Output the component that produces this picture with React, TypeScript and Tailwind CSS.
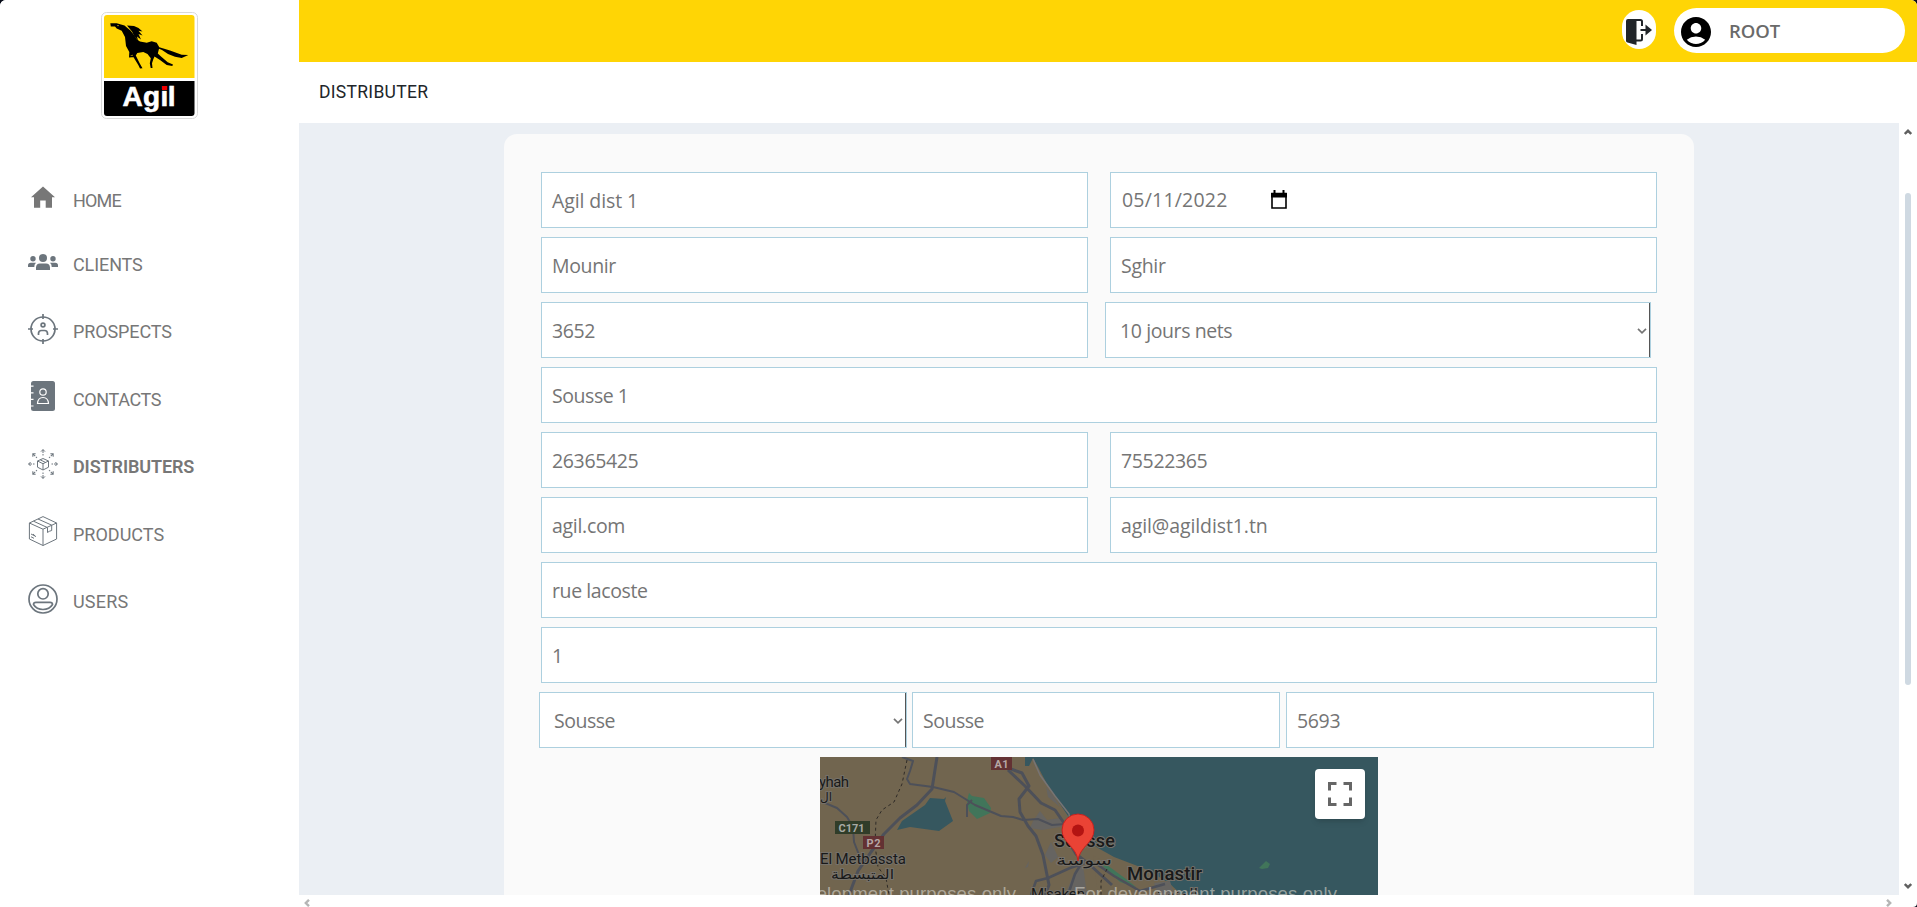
import React from "react";
import { MdAccountCircle } from "react-icons/md";

const stroke = { fill: "none", stroke: "currentColor" } as const;

function Logo() {
  return (
    <svg width="97" height="107" viewBox="0 0 97 107">
      <rect x="0.5" y="0.5" width="96" height="106" rx="5" fill="#fff" stroke="#d9d9d9" />
      <path d="M3 66V6a3 3 0 0 1 3-3H90.500a3 3 0 0 1 3 3V66Z" fill="#ffd505" />
      <path d="M3 69H93.500V101a3 3 0 0 1-3 3H6a3 3 0 0 1-3-3Z" fill="#000" />
      <path
        fill="#000"
        d="M9.300 11.300 15.700 11.300 20 12.500 23.500 13.500 27 16.500 29.700 18.700 33 23 36 27.500 39 29.500 45.700 30.700 50.700 29.300 55.700 30.700 58.300 35.300 69 38.500 80.700 42.700 87.300 43 80.700 46 74 44.800 67 42 61 38 58 36.700 56.800 41.500 60 44.500 66.700 50.200 72 52.500 71.300 54 65.700 53 59 48 53.500 44.500 52.300 47.300 51 51.300 51.500 56 49.700 56 48.800 51.300 49.800 46.300 46.500 42 42.300 40 36.300 41 34.800 43.500 38.500 51 41.500 56.300 39 56.500 37.300 53 33 46 31.500 42.800 29 43.500 34.500 43.800 34 45 28 45.500 28.300 40 25 34 24 25 20.700 18.700 15.700 16.500 14 14.500 9.800 14.500Z"
      />
      <path
        fill="#000"
        d="M26 13.500 33 14 37.500 16 41.500 19.500 37.500 18.700 41.500 23.500 37.500 22 40 27.500 36 24.500 37 28.500 33.500 24.500 31 19.500Z"
      />
      <circle cx="17" cy="13.600" r="0.700" fill="#ffd505" />
      <text x="21.5 42 59.5 66.800" y="94" fontFamily="Liberation Sans, sans-serif" fontWeight="700" fontSize="28" fill="#fff" stroke="#fff" strokeWidth="0.600">
        Agil
      </text>
      <rect x="60.500" y="72.500" width="6.300" height="6" fill="#000" />
      <rect x="61" y="74" width="5.200" height="4" fill="#f00000" />
    </svg>
  );
}

const HomeIcon = () => (
  <svg width="30" height="30" viewBox="0 0 30 30" fill="#777">
    <path d="M15 3.500 3 14.300h3V24.800h6.200v-7.300h5.500v7.300H24V14.300h3Z" />
  </svg>
);

const ClientsIcon = () => (
  <svg width="30" height="30" viewBox="0 0 30 30" fill="currentColor">
    <circle cx="15" cy="11" r="4" />
    <circle cx="5" cy="11.700" r="2.700" />
    <circle cx="25" cy="11.700" r="2.700" />
    <path d="M8 23v-2.500a4.200 4.200 0 0 1 4-4h6a4.200 4.200 0 0 1 4 4V23ZM0 20v-1.500A2.800 2.800 0 0 1 2.800 15.700H8A5 5 0 0 0 6.300 20ZM30 20v-1.500a2.800 2.800 0 0 0-2.800-2.800H22A5 5 0 0 1 23.700 20Z" />
  </svg>
);

const ProspectsIcon = () => (
  <svg width="30" height="30" viewBox="0 0 30 30" {...stroke} strokeWidth="1.700">
    <circle cx="15" cy="15" r="12" />
    <path d="M15 0v5M15 25v5M0 15h5M25 15h5" />
    <circle cx="15" cy="11" r="1.900" />
    <path d="M10.500 21v-1.500a3 3 0 0 1 3-3h3a3 3 0 0 1 3 3V21" />
  </svg>
);

const ContactsIcon = () => (
  <svg width="30" height="30" viewBox="0 0 30 30">
    <rect x="3" y="0" width="24" height="30" rx="2.500" fill="currentColor" />
    <g fill="none" stroke="#fff" strokeWidth="1.200">
      <path d="M3 5.200h2.500M3 11.800h2.500M3 18.400h2.500M3 25h2.500" />
      <circle cx="15" cy="11" r="3.200" />
      <path d="M9.500 22.500c.3-4 2.400-6 5.500-6s5.200 2 5.500 6Z" />
    </g>
  </svg>
);

const DistributersIcon = () => (
  <svg width="30" height="30" viewBox="0 0 30 30" {...stroke} strokeWidth="1">
    <path d="M15 9.500 20.500 12v6.200L15 21l-5.500-2.800V12ZM9.500 12l5.500 2.700 5.500-2.700M15 14.700V21M12.200 10.800l5.500 2.700" />
    {[0, 45, 90, 135, 180, 225, 270, 315].map((angle) => (
      <g key={angle} transform={`rotate(${angle} 15 15)`}>
        <path d="M15 .6V4M15 5v1.500M13 2.600l2-2 2 2" />
      </g>
    ))}
  </svg>
);

const ProductsIcon = () => (
  <svg width="30" height="30" viewBox="0 0 30 30" {...stroke} strokeWidth="1">
    <path d="M15 .6 28.600 7v16L15 29.500 1.400 23V7ZM1.400 7 15 13.200 28.600 7M15 13.200V29.500M5.500 5.200 19.300 11.500M10 3 23.800 9.200M19.500 11.500v5l1.800-1.200 2.400-.8V9.200M3 18l4 2M3 20.800l3 1.500M5 18l3 2.800" />
  </svg>
);

const UsersIcon = () => (
  <svg width="30" height="30" viewBox="0 0 30 30" {...stroke} strokeWidth="1.700">
    <circle cx="15" cy="15" r="14" />
    <circle cx="15" cy="9.800" r="5.200" />
    <path d="M5.500 20.500c0-1.500 1-2.200 2.500-2.200h14c1.500 0 2.500.7 2.500 2.200-1.800 3-5 5-9.500 5s-7.700-2-9.500-5Z" />
  </svg>
);

const navItems = [
  { label: "HOME", Icon: HomeIcon, row: "h-16", text: "pt-[6px] tracking-[-0.8px]" },
  { label: "CLIENTS", Icon: ClientsIcon, row: "h-[67px]", text: "pt-[6px] tracking-[-0.1px]" },
  { label: "PROSPECTS", Icon: ProspectsIcon, row: "h-[67px]", text: "pt-[6px] tracking-[-0.1px]" },
  { label: "CONTACTS", Icon: ContactsIcon, row: "h-[68px]", text: "pt-[7px] tracking-[-0.4px]" },
  { label: "DISTRIBUTERS", Icon: DistributersIcon, row: "h-[67px]", text: "pt-[6px] font-semibold tracking-[-0.1px]" },
  { label: "PRODUCTS", Icon: ProductsIcon, row: "h-[68px]", text: "pt-[7px]" },
  { label: "USERS", Icon: UsersIcon, row: "h-[67px]", text: "pt-[6px] tracking-[0.2px]" },
];

function Sidebar() {
  return (
    <aside className="flex w-[299px] shrink-0 flex-col bg-white">
      <div className="pt-3 pl-[101px]">
        <Logo />
      </div>
      <nav className="flex flex-col pt-[64px] pl-7 text-[#6c757d]">
        {navItems.map(({ label, Icon, row, text }) => (
          <a key={label} className={`flex items-start ${row}`}>
            <Icon />
            <span className={`ml-[15px] font-[Roboto,sans-serif] text-[18px] leading-6 text-[#777] ${text}`}>{label}</span>
          </a>
        ))}
      </nav>
    </aside>
  );
}

function Chevron({ className = "" }: { className?: string }) {
  return (
    <svg className={className} width="10" height="6" viewBox="0 0 10 6" fill="none" stroke="currentColor">
      <path d="M1 .8 5 4.800 9 .8" strokeWidth="1.700" />
    </svg>
  );
}

function ScrollArrow({ className = "" }: { className?: string }) {
  return (
    <svg className={className} width="8" height="6" viewBox="0 0 8 6" fill="none" stroke="currentColor">
      <path d="M.8 1 4 4.200 7.200 1" strokeWidth="2.400" />
    </svg>
  );
}

function Header() {
  return (
    <header className="flex h-[62px] shrink-0 items-start justify-end bg-[#ffd505] pr-3">
      <button className="mt-[10px] mr-[18px] flex h-[39px] w-[34px] items-center justify-center rounded-[17px] bg-white pt-1">
        <svg width="26" height="26" viewBox="0 0 26 26" fill="#212529">
          <path d="M0 2a2 2 0 0 1 2-2h8.500v26L1.500 23.500A2 2 0 0 1 0 21.500Z" />
          <path d="M10 1h4.500A1.500 1.500 0 0 1 16 2.500V7M16 15v5a1.500 1.500 0 0 1-1.500 1.500H10M14.500 11H20" fill="none" stroke="#212529" strokeWidth="2" />
          <path d="M19.500 5.500 26 11l-6.500 5.500Z" />
        </svg>
      </button>
      <div className="mt-2 flex h-[45px] w-[231px] items-center rounded-full bg-white pl-1">
        <MdAccountCircle className="mt-[3px] size-9 text-black" />
        <span className="ml-[15px] font-['Open_Sans',sans-serif] text-[18.500px] font-semibold tracking-[-0.1px] text-[#6a6a6a]">ROOT</span>
      </div>
    </header>
  );
}

function Field({ value, className = "" }: { value: string; className?: string }) {
  return <div className={`flex h-14 items-center border border-[#add0df] bg-white pt-px pl-[10px] ${className}`}>{value}</div>;
}

function SelectField({ value, className = "" }: { value: string; className?: string }) {
  return (
    <div className={`flex h-14 border border-[#add0df] bg-white ${className}`}>
      <div className="flex flex-1 items-center justify-between border-r border-[#555] pt-px pr-[2px] pl-[14px]">
        {value}
        <Chevron />
      </div>
    </div>
  );
}

function DateField() {
  return (
    <div className="flex h-14 w-[547px] items-center border border-[#add0df] bg-white pl-[11px]">
      <span className="w-[148px] tracking-[0.2px]">05/11/2022</span>
      <svg width="18" height="20" viewBox="0 0 18 20">
        <path d="M2 3.500h14v14.500H2Z" fill="none" stroke="#000" strokeWidth="1.600" />
        <path d="M1 3h16v4.500H1ZM3.500 0h2v4h-2ZM12.500 0h2v4h-2Z" />
      </svg>
    </div>
  );
}

function MapView() {
  return (
    <div className="relative ml-[316px] h-[138px] w-[558px] overflow-hidden">
      <svg width="558" height="138" viewBox="0 0 558 138" fontFamily="Roboto, sans-serif">
        <rect width="558" height="138" fill="#71654f" />
        <path d="M205 0H558V138H362L350 127 330 114 315 108 294 100 278 91 262 80 250 62 240 47 228 29 218 10 213 1 209 9H205Z" fill="#36575f" />
        <path d="M77 73 82 64 105 48 110 41 124 42 126 40 125 44 133 64 119 74 90 70Z" fill="#36575f" />
        <path d="M147 44 149 36 152 39 164 41 171 51 170 56 157 62 149 54Z" fill="#41755a" />
        <path d="M226 30 233 38 240 50 228 40ZM213 64 220 54 227 63 240 61 246 69 222 73 210 71ZM225 98 231 85 238 100 231 106ZM255 114 263 108 267 138H245ZM205 111 209 104 208 110Z" fill="#666461" />
        <path d="M273 98 287 107 302 120 318 132 326 125 348 124 354 132 356 138H278Z" fill="#71654f" />
        <path d="M276 103 287 108 306 122 316 130 300 125Z" fill="#41755a" />
        <path d="M334 126 350 124 354 138H338Z" fill="#666461" />
        <path d="M439 111 446 104 450 107 448 111 442 112Z" fill="#41755a" />
        <g fill="none" stroke="#4d5059" strokeWidth="3" strokeLinejoin="round">
          <path d="M82 0 93 4 90 14 87 22 90 27 113 30 134 35 155 48 181 59 193 60 203 63 218 62 232 68 245 67" strokeWidth="2" />
          <path d="M117 0 112 32 97 48 80 61 64 77 51 95 38 114 29 138" />
          <path d="M0 44 17 51 27 60 33 70 34 85 43 108" strokeWidth="2" />
          <path d="M188 13 205 29 221 46 235 53 246 69 247 82 256 97 270 108 292 128" />
          <path d="M191 12 202 16 209 29 199 42 200 55 208 69 216 79 223 98 229 128 225 138" />
          <path d="M211 138 216 124 228 121 250 111 271 104M248 138 255 117 261 107M278 108 294 119 320 134 345 127" strokeWidth="2.500" />
          <path d="M147 60V48L152 43" strokeWidth="2" />
          <path d="M213 2 220 18 235 39 249 57 251 71" strokeWidth="1.500" stroke="#777474" />
        </g>
        <path d="M87 3 82 27 74 45 62 53 56 63 55 88 58 110 66 121 69 138M287 112 281 124 281 138" fill="none" stroke="#2f2b27" strokeWidth="1" strokeDasharray="3 3" />
        <rect x="15" y="64" width="35" height="13" fill="#303d29" />
        <text x="18.500" y="74.500" fontSize="11" fontWeight="700" fill="#a8aaa4" textLength="26">C171</text>
        <rect x="43" y="79" width="21" height="13" fill="#633133" />
        <text x="46.500" y="89.500" fontSize="11" fontWeight="700" fill="#b6a6a5" textLength="14">P2</text>
        <rect x="171" y="0" width="21" height="13" fill="#633133" />
        <text x="174.500" y="10.500" fontSize="11" fontWeight="700" fill="#b6a6a5" textLength="14">A1</text>
        <g fill="#191919" stroke="#75716a" strokeWidth="2" paintOrder="stroke" fontSize="15">
          <text x="-1" y="29.500" textLength="30">yhah</text>
          <text x="0" y="44" fontFamily="DejaVu Sans, sans-serif" fontSize="12">ال</text>
          <text x="0" y="107" textLength="86">El Metbassta</text>
          <text x="11" y="122" fontFamily="DejaVu Sans, sans-serif" fontSize="13" textLength="63" lengthAdjust="spacingAndGlyphs">المتبسطة</text>
          <text x="211" y="142" textLength="54">M'saken</text>
          <text x="234" y="90" fontSize="18" fontWeight="500" textLength="61">Sousse</text>
          <text x="236" y="108" fontFamily="DejaVu Sans, sans-serif" fontSize="14" textLength="56" lengthAdjust="spacingAndGlyphs">سوسة</text>
          <text x="307" y="123" fontSize="18.500" fontWeight="500" textLength="75">Monastir</text>
          <text x="324" y="142" fontFamily="DejaVu Sans, sans-serif" fontSize="14" textLength="54" lengthAdjust="spacingAndGlyphs">المنستير</text>
        </g>
        <g fill="#d8d5cc" fillOpacity="0.600" fontFamily="Liberation Sans, sans-serif" fontSize="18.500">
          <text x="-67" y="143" textLength="263">For development purposes only</text>
          <text x="254" y="143" textLength="263">For development purposes only</text>
        </g>
        <path d="M258 104C257 90 242 86 242 73a16 16 0 0 1 32 0C274 86 259 90 258 104Z" fill="#ea4335" stroke="#c5221f" strokeWidth="1" />
        <circle cx="258" cy="73.500" r="6" fill="#b31412" />
      </svg>
      <button className="absolute top-3 right-[13px] flex size-[50px] items-center justify-center rounded-sm bg-white shadow-md">
        <svg width="24" height="24" viewBox="0 0 24 24" fill="none" stroke="#666" strokeWidth="3">
          <path d="M1.500 8.500v-7h7M15.500 1.500h7v7M22.500 15.500v7h-7M8.500 22.500h-7v-7" />
        </svg>
      </button>
    </div>
  );
}

function DistributerForm() {
  return (
    <main className="h-full w-[1600px] overflow-hidden bg-[#ebeff4] pt-[11px] pl-[205px]">
      <section className="flex h-full w-[1190px] flex-col gap-[9px] rounded-t-[13px] bg-[#fafafa] pt-[38px] font-['Open_Sans',sans-serif] text-[19.500px] text-[#757575]">
        <div className="flex gap-[22px] pl-[37px]">
          <Field value="Agil dist 1" className="w-[547px] tracking-[-0.1px]" />
          <DateField />
        </div>
        <div className="flex gap-[22px] pl-[37px]">
          <Field value="Mounir" className="w-[547px] tracking-[-0.350px]" />
          <Field value="Sghir" className="w-[547px] tracking-[-0.3px]" />
        </div>
        <div className="flex gap-[17px] pl-[37px]">
          <Field value="3652" className="w-[547px] tracking-[-0.4px]" />
          <SelectField value="10 jours nets" className="w-[546px] tracking-[-0.4px]" />
        </div>
        <Field value="Sousse 1" className="ml-[37px] w-[1116px] tracking-[-0.450px]" />
        <div className="flex gap-[22px] pl-[37px]">
          <Field value="26365425" className="w-[547px] tracking-[-0.350px]" />
          <Field value="75522365" className="w-[547px] tracking-[-0.350px]" />
        </div>
        <div className="flex gap-[22px] pl-[37px]">
          <Field value="agil.com" className="w-[547px] tracking-[-0.3px]" />
          <Field value="agil@agildist1.tn" className="w-[547px] tracking-[-0.1px]" />
        </div>
        <Field value="rue lacoste" className="ml-[37px] w-[1116px] tracking-[-0.4px]" />
        <Field value="1" className="ml-[37px] w-[1116px]" />
        <div className="flex pl-[35px]">
          <SelectField value="Sousse" className="w-[368px] tracking-[-0.5px]" />
          <Field value="Sousse" className="ml-[5px] w-[368px] tracking-[-0.5px]" />
          <Field value="5693" className="ml-[6px] w-[368px] tracking-[-0.350px]" />
        </div>
        <MapView />
      </section>
    </main>
  );
}

export default function App() {
  return (
    <div className="h-[907px] w-[1917px] overflow-hidden bg-[#070b18]">
      <div className="flex h-full overflow-hidden rounded-t-[6px] rounded-br-[4px] bg-white">
        <Sidebar />
        <div className="flex min-w-0 flex-1 flex-col">
          <Header />
          <div className="flex h-[61px] shrink-0 items-center pl-5 font-[Roboto,sans-serif] text-[17.500px] tracking-[0.3px] text-[#212529]">DISTRIBUTER</div>
          <div className="flex h-[772px] shrink-0">
            <DistributerForm />
            <div className="flex w-[18px] flex-col items-center justify-between py-[6px] text-[#606060]">
              <ScrollArrow className="rotate-180" />
              <div className="mt-[58px] mb-auto h-[492px] w-[6px] rounded-full bg-[#cfd9e2]" />
              <ScrollArrow />
            </div>
          </div>
          <div className="flex h-3 items-center justify-between pt-[4px] pr-[24px] pl-[4px] text-[#b5b5b5]">
            <ScrollArrow className="rotate-90" />
            <ScrollArrow className="-rotate-90" />
          </div>
        </div>
      </div>
    </div>
  );
}
